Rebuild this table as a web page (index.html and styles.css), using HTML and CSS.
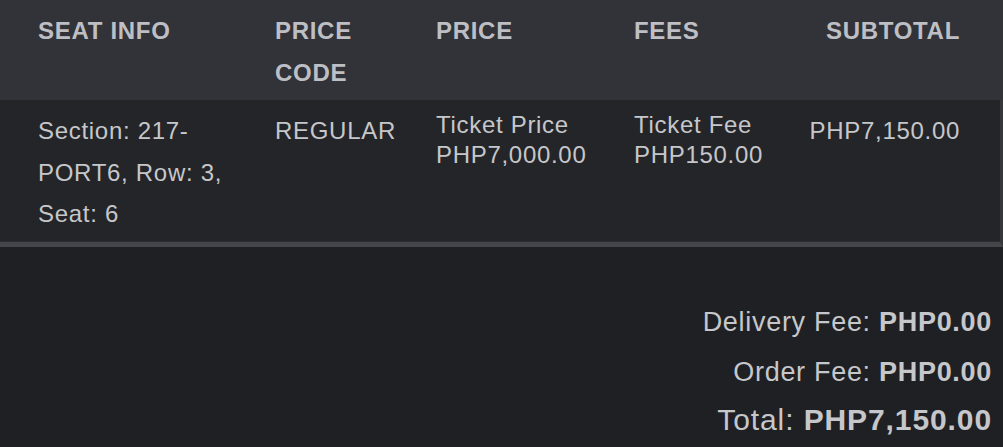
FILE: index.html
```html
<!DOCTYPE html>
<html lang="en">
<head>
    <meta charset="utf-8">
    <meta name="viewport" content="width=device-width, initial-scale=1.0">
    <title>Order Summary</title>
    <link rel="stylesheet" href="styles.css">
</head>
<body>
    <div class="order-table">
        <div class="row row--head">
            <div class="cell">SEAT INFO</div>
            <div class="cell">PRICE CODE</div>
            <div class="cell">PRICE</div>
            <div class="cell">FEES</div>
            <div class="cell cell--right">SUBTOTAL</div>
        </div>

        <div class="row row--item">
            <div class="cell cell--seat">Section: 217-PORT6, Row: 3, Seat: 6</div>
            <div class="cell">REGULAR</div>
            <div class="cell cell--compact">
                <div>Ticket Price</div>
                <div>PHP7,000.00</div>
            </div>
            <div class="cell cell--compact">
                <div>Ticket Fee</div>
                <div>PHP150.00</div>
            </div>
            <div class="cell cell--right">PHP7,150.00</div>
        </div>
    </div>

    <div class="summary">
        <div class="summary-line">Delivery Fee: <b>PHP0.00</b></div>
        <div class="summary-line">Order Fee: <b>PHP0.00</b></div>
        <div class="summary-line summary-line--total">Total: <b>PHP7,150.00</b></div>
    </div>
</body>
</html>
```

FILE: styles.css
```css
:root {
    --ff: 'Liberation Sans', Arial, Helvetica, sans-serif;
    --bg: #1f2023;
    --head-bg: #323338;
    --row-bg: #242528;
    --edge: #45464b;
    --text: #c6c7cb;
    --head-text: #bebfc4;
}

body {
    font-family: var(--ff);
    letter-spacing: 0.7px;
    color: var(--text);
    background: var(--bg);

    margin: 0;
    width: 1003px;
    height: 447px;
    overflow: hidden;
}

.order-table {
    width: 1003px;
}

.row {
    display: grid;
    grid-template-columns: 237px 161px 198px 170px 1fr;
    padding: 0 43px 0 38px;
}

.row--head {
    background: var(--head-bg);
    color: var(--head-text);
    font-size: 24px;
    font-weight: bold;
    line-height: 41.7px;

    padding-top: 10px;
    padding-bottom: 6.6px;
}
.row--head .cell {
    padding-right: 40px;
}
.row--head .cell--right {
    padding-right: 0;
}

.row--item {
    background: var(--row-bg);
    font-size: 24px;
    line-height: 41.5px;

    padding-top: 10px;
    padding-bottom: 7.5px;
    border-right: 3px solid #36373b;
    border-bottom: 5px solid var(--edge);
    box-shadow: inset 0 -1px 0 #2b2c30;
}
.row--item .cell--seat {
    padding-right: 30px;
}
.row--item .cell--right {
    margin-right: -3px;
}

.cell--compact {
    line-height: 30px;
}

.cell--right {
    text-align: right;
}

.summary {
    margin-top: 50px;
    padding-right: 11px;
    text-align: right;
}

.summary-line {
    font-size: 27px;
    line-height: 50px;
}
.summary-line--total {
    font-size: 30px;
    line-height: 46px;
    letter-spacing: 0.9px;
}
.summary-line b {
    font-weight: bold;
}
```
